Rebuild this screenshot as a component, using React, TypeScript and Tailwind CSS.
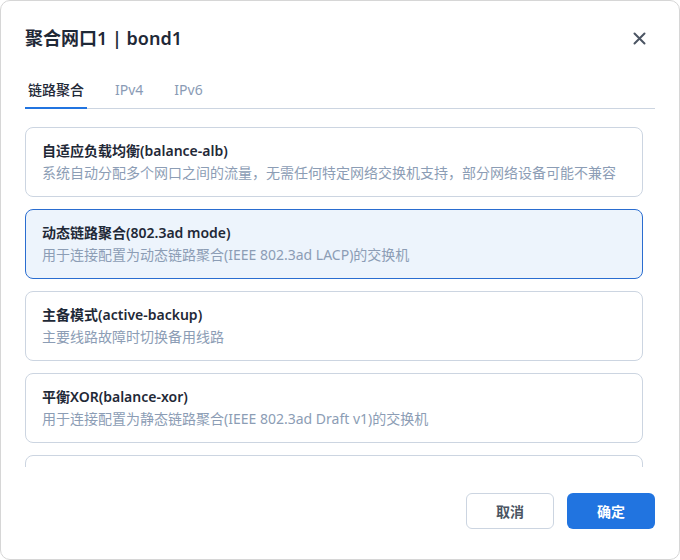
import { useState } from "react";

type Mode = {
  id: string;
  title: string;
  desc: string;
};

const modes: Mode[] = [
  {
    id: "balance-alb",
    title: "自适应负载均衡(balance-alb)",
    desc: "系统自动分配多个网口之间的流量，无需任何特定网络交换机支持，部分网络设备可能不兼容",
  },
  {
    id: "802.3ad",
    title: "动态链路聚合(802.3ad mode)",
    desc: "用于连接配置为动态链路聚合(IEEE 802.3ad LACP)的交换机",
  },
  {
    id: "active-backup",
    title: "主备模式(active-backup)",
    desc: "主要线路故障时切换备用线路",
  },
  {
    id: "balance-xor",
    title: "平衡XOR(balance-xor)",
    desc: "用于连接配置为静态链路聚合(IEEE 802.3ad Draft v1)的交换机",
  },
  {
    id: "balance-rr",
    title: "轮询(balance-rr)",
    desc: "依次在每个网口上发送数据包",
  },
];

const tabs = ["链路聚合", "IPv4", "IPv6"];

export default function App() {
  const [tab, setTab] = useState(0);
  const [selected, setSelected] = useState("802.3ad");

  return (
    <div
      className="flex h-[560px] w-[680px] flex-col overflow-hidden rounded-[10px] border border-[#d6d6d6] bg-white"
      style={{ fontFamily: '"Noto Sans", "Noto Sans CJK SC", sans-serif' }}
    >
      <div className="flex items-center justify-between pl-[24px] pr-[30px] pt-[25px]">
        <h1 className="text-[18px] font-semibold leading-[24px] text-[#1f2937]">
          聚合网口1 | bond1
        </h1>
        <button type="button" className="flex h-5 w-5 items-center justify-center text-[#4b5563]">
          <svg width="13" height="13" viewBox="0 0 13 13" fill="none">
            <path d="M1.5 1.5l10 10M11.5 1.5l-10 10" stroke="currentColor" strokeWidth="2" strokeLinecap="round" />
          </svg>
        </button>
      </div>

      <div className="mx-[24px] mt-[30px] flex gap-[25px] border-b border-[#ccd5e1]">
        {tabs.map((t, i) => (
          <button
            key={t}
            type="button"
            onClick={() => setTab(i)}
            className={
              i === tab
                ? "-mb-px border-b-2 border-[#2174e0] px-[3px] pb-[7px] text-[14px] font-medium leading-[20px] text-[#1f2937]"
                : "-mb-px border-b-2 border-transparent px-[3px] pb-[7px] text-[14px] leading-[20px] text-[#8a9bb5]"
            }
          >
            {t}
          </button>
        ))}
      </div>

      <div className="flex min-h-0 flex-1 flex-col gap-[12px] overflow-hidden pl-[24px] pr-[36px] pt-[18px]">
        {modes.map((m) => (
          <button
            key={m.id}
            type="button"
            onClick={() => setSelected(m.id)}
            className={
              m.id === selected
                ? "shrink-0 rounded-[8px] border border-[#2a6dd0] bg-[#edf4fc] px-[16px] py-[12px] text-left"
                : "shrink-0 rounded-[8px] border border-[#ccd5e1] bg-white px-[16px] py-[12px] text-left"
            }
          >
            <div className="text-[14px] font-semibold leading-[22px] text-[#1f2937]">{m.title}</div>
            <div className="text-[14px] leading-[22px] text-[#8c9db5]">{m.desc}</div>
          </button>
        ))}
      </div>

      <div className="flex justify-end gap-[13px] px-[24px] pb-[30px] pt-[26px]">
        <button
          type="button"
          className="h-[36px] w-[88px] rounded-[6px] border border-[#ccd5e1] bg-white text-[14px] font-semibold text-[#4b5563]"
        >
          取消
        </button>
        <button
          type="button"
          className="h-[36px] w-[88px] rounded-[6px] bg-[#2174e0] text-[14px] font-semibold text-white"
        >
          确定
        </button>
      </div>
    </div>
  );
}
